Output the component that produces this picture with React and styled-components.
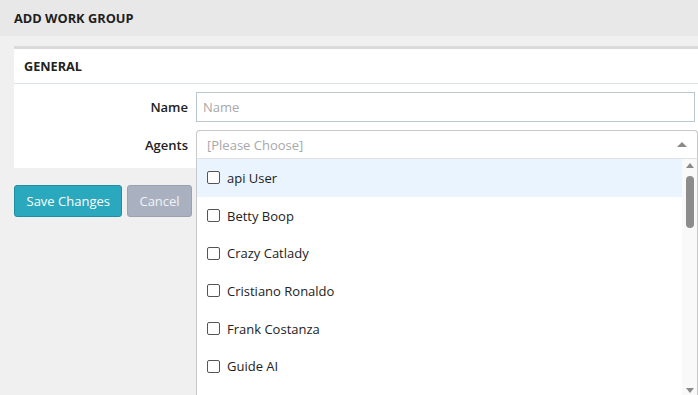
import React from 'react';
import styled, { createGlobalStyle } from 'styled-components';

const GlobalStyle = createGlobalStyle`
  body {
    margin: 0;
    background: #f0f0f0;
    font-family: 'Open Sans', 'Liberation Sans', sans-serif;
    color: #222;
    overflow: hidden;
  }
`;

const Page = styled.div`
  width: 698px;
  height: 395px;
  overflow: hidden;
`;

const TopBar = styled.div`
  height: 36px;
  background: #e8e8e8;
  display: flex;
  align-items: center;
  padding-left: 14px;
  font-size: 12.8px;
  font-weight: 700;
  color: #1e1e1e;
`;

const Content = styled.div`
  padding: 10px 0 0 14px;
`;

const Card = styled.div`
  background: #fff;
  border-top: 3px solid #dadada;
  padding-bottom: 9px;
`;

const CardHeader = styled.div`
  height: 34px;
  display: flex;
  align-items: center;
  padding-left: 10px;
  font-size: 12.7px;
  font-weight: 700;
  border-bottom: 1px solid #dde3e7;
`;

const FormBody = styled.div`
  padding-top: 8px;
  display: grid;
  grid-template-columns: 174px 1fr;
  column-gap: 8px;
  row-gap: 8px;
  align-items: center;
`;

const Label = styled.label`
  text-align: right;
  font-size: 13px;
  font-weight: 600;
  color: #222;
`;

const Input = styled.input`
  box-sizing: border-box;
  height: 30px;
  width: 499px;
  border: 1px solid #b9c8cf;
  padding: 0 6px;
  font-family: inherit;
  font-size: 13px;
  outline: none;
  &::placeholder {
    color: #a8a8a8;
  }
`;

const SelectWrap = styled.div`
  position: relative;
  width: 502px;
`;

const SelectBox = styled.div`
  box-sizing: border-box;
  height: 29px;
  border: 1px solid #c8c8c8;
  border-bottom-color: #e2e2e2;
  border-radius: 4px 4px 0 0;
  display: flex;
  align-items: center;
  justify-content: space-between;
  padding: 0 10px;
  font-size: 13px;
  color: #a8a8a8;
`;

const Caret = styled.span`
  width: 0;
  height: 0;
  border-left: 5px solid transparent;
  border-right: 5px solid transparent;
  border-bottom: 5px solid #8a8a8a;
`;

const Dropdown = styled.div`
  position: absolute;
  top: 29px;
  left: 0;
  right: 0;
  height: 237px;
  background: #fff;
  border-left: 1px solid #c8c8c8;
  border-right: 1px solid #c8c8c8;
  display: flex;
  z-index: 5;
`;

const List = styled.ul`
  flex: 1;
  margin: 0;
  padding: 0;
  list-style: none;
`;

const Item = styled.li`
  height: 37.7px;
  display: flex;
  align-items: center;
  padding-left: 10px;
  font-size: 13px;
  color: #222;
  background: ${p => (p.$active ? '#eaf4fe' : '#fff')};
`;

const Check = styled.span`
  box-sizing: border-box;
  width: 13px;
  height: 13px;
  border: 1px solid #555;
  border-radius: 2px;
  margin-right: 7px;
  background: #fff;
`;

const Scrollbar = styled.div`
  width: 15px;
  background: #f9f9f9;
  display: flex;
  flex-direction: column;
  align-items: center;
  padding: 4px 0 3px;
`;

const ArrowUp = styled.span`
  width: 0;
  height: 0;
  border-left: 4px solid transparent;
  border-right: 4px solid transparent;
  border-bottom: 5px solid #8a8a8a;
`;

const ArrowDown = styled.span`
  width: 0;
  height: 0;
  border-left: 4px solid transparent;
  border-right: 4px solid transparent;
  border-top: 5px solid #8a8a8a;
  margin-top: auto;
`;

const Thumb = styled.span`
  width: 8px;
  height: 52px;
  border-radius: 4px;
  background: #8c8c8c;
  margin-top: 8px;
`;

const Actions = styled.div`
  display: flex;
  gap: 5px;
  padding-top: 17px;
`;

const Button = styled.button`
  height: 32px;
  padding: 0 ${p => (p.$secondary ? '11px' : '11.5px')};
  border-radius: 3px;
  font-family: inherit;
  font-size: 13px;
  color: ${p => (p.$secondary ? '#f2f4f8' : '#fff')};
  background: ${p => (p.$secondary ? '#a9b0bf' : '#2aa9be')};
  border: 1px solid ${p => (p.$secondary ? '#9aa1b1' : '#1f8ea1')};
`;

const agents = [
  'api User',
  'Betty Boop',
  'Crazy Catlady',
  'Cristiano Ronaldo',
  'Frank Costanza',
  'Guide AI',
];

export default function App() {
  return (
    <Page>
      <GlobalStyle />
      <TopBar>ADD WORK GROUP</TopBar>
      <Content>
        <Card>
          <CardHeader>GENERAL</CardHeader>
          <FormBody>
            <Label>Name</Label>
            <Input placeholder="Name" />
            <Label>Agents</Label>
            <SelectWrap>
              <SelectBox>
                [Please Choose]
                <Caret />
              </SelectBox>
              <Dropdown>
                <List>
                  {agents.map((a, i) => (
                    <Item key={a} $active={i === 0}>
                      <Check />
                      {a}
                    </Item>
                  ))}
                </List>
                <Scrollbar>
                  <ArrowUp />
                  <Thumb />
                  <ArrowDown />
                </Scrollbar>
              </Dropdown>
            </SelectWrap>
          </FormBody>
        </Card>
        <Actions>
          <Button>Save Changes</Button>
          <Button $secondary>Cancel</Button>
        </Actions>
      </Content>
    </Page>
  );
}
